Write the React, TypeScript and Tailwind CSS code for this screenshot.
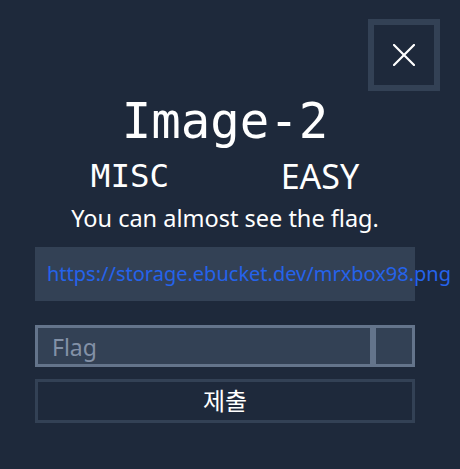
import React from "react";

export default function App() {
  return (
    <div className="relative w-[460px] h-[469px] bg-[#1e293b] overflow-hidden" style={{ fontFamily: '"Noto Sans", "Noto Sans CJK KR", sans-serif' }}>
      <button className="absolute left-[368px] top-[19px] w-[72px] h-[72px] border-[6px] border-[#334155] flex items-center justify-center">
        <svg width="22" height="22" viewBox="0 0 22 22" fill="none" stroke="white" strokeWidth="2.2" strokeLinecap="square">
          <path d="M1 1L21 21M21 1L1 21" />
        </svg>
      </button>
      <div className="pl-[35px] pr-[45px] pt-[98px] flex flex-col">
        <h1 className="text-center text-white text-[49px] leading-[48px]" style={{ fontFamily: '"DejaVu Sans Mono", monospace' }}>Image-2</h1>
        <div className="grid grid-cols-2 mt-[10px] h-[40px] items-center">
          <div className="text-center text-white text-[32.5px] leading-[40px]" style={{ fontFamily: '"DejaVu Sans Mono", monospace' }}>MISC</div>
          <div className="text-center text-white text-[34px] leading-[40px]">EASY</div>
        </div>
        <p className="text-center text-white text-[23.5px] leading-[28px] mt-[8px] whitespace-nowrap">You can almost see the flag.</p>
        <div className="mt-[15px] h-[54px] bg-[#334155] flex items-center pl-[12px] whitespace-nowrap overflow-visible">
          <a className="text-[#2563eb] text-[20px] leading-[24px]">https://storage.ebucket.dev/mrxbox98.png</a>
        </div>
        <div className="mt-[24px] flex h-[42px]">
          <div className="flex-1 border-[3px] border-[#64748b] bg-[#334155] flex items-center pl-[14px]">
            <span className="text-[#8391a7] text-[23px] leading-[28px] mt-[2px]">Flag</span>
          </div>
          <div className="w-[42px] border-[3px] border-[#64748b] bg-[#334155]" />
        </div>
        <button className="mt-[12px] h-[44px] border-[3px] border-[#334155] text-white text-[24px] leading-[30px] flex items-center justify-center">제출</button>
      </div>
    </div>
  );
}
